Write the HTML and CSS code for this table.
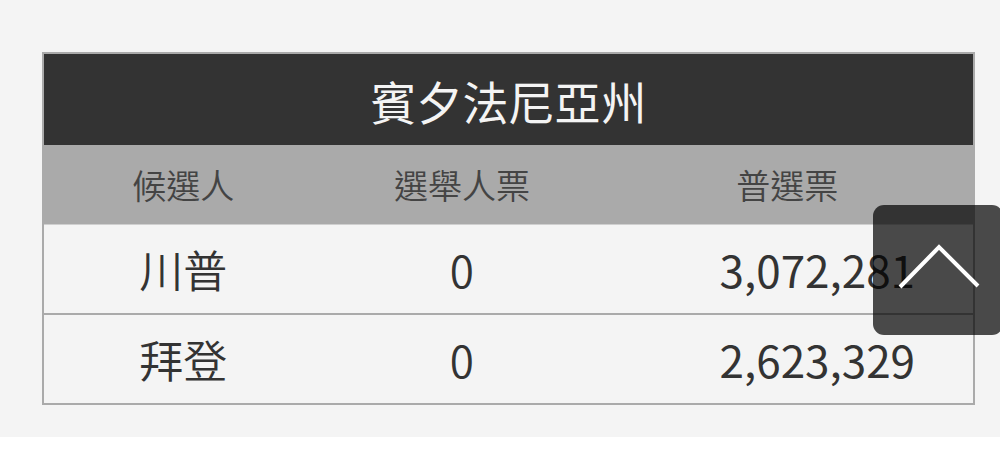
FILE: index.html
```html
<!DOCTYPE html>
<html lang="zh-Hant">
<head>
<meta charset="utf-8">
<title>賓夕法尼亞州</title>
<link rel="stylesheet" href="styles.css">
</head>
<body>
<section class="panel">
  <table class="results">
    <colgroup>
      <col class="c1"><col class="c2"><col class="c3">
    </colgroup>
    <thead>
      <tr class="title-row"><th colspan="3">賓夕法尼亞州</th></tr>
      <tr class="head-row"><th>候選人</th><th>選舉人票</th><th>普選票</th></tr>
    </thead>
    <tbody>
      <tr><td>川普</td><td>0</td><td class="num">3,072,281</td></tr>
      <tr><td>拜登</td><td>0</td><td class="num">2,623,329</td></tr>
    </tbody>
  </table>
</section>
<a class="to-top" href="#" aria-label="回到頂部">
  <svg viewBox="0 0 130 130" width="130" height="130" aria-hidden="true">
    <polyline points="27,82 66,42 105,81" fill="none" stroke="#ffffff" stroke-width="4"/>
  </svg>
</a>
</body>
</html>
```

FILE: styles.css
```css
html, body {
  margin: 0;
  padding: 0;
  background: #ffffff;
}
body {
  font-family: "Noto Sans CJK TC", "Noto Sans", sans-serif;
  color: #333333;
}
.panel {
  background: #f4f4f4;
  padding: 52px 25px 32px 42px;
}
.results {
  width: 933px;
  border-collapse: collapse;
  border: 2px solid #aaaaaa;
  table-layout: fixed;
}
.c1 { width: 30%; }
.c2 { width: 30%; }
.c3 { width: 40%; }
.title-row th {
  background: #333333;
  color: #f4f4f4;
  font-size: 46px;
  font-weight: 400;
  height: 91px;
  padding: 0;
  line-height: 1;
  border-bottom: 0;
}
.head-row th {
  background: #aaaaaa;
  color: #444444;
  font-size: 34px;
  font-weight: 350;
  height: 79px;
  padding: 0;
  line-height: 1;
  border-bottom: 1px solid #cfcfcf;
}
.results td {
  text-align: center;
  font-size: 44px;
  font-weight: 350;
  height: 88px;
  padding: 0;
  line-height: 1;
  color: #333333;
  border-bottom: 2px solid #aaaaaa;
}
.results td.num {
  padding-left: 60px;
  font-weight: 400;
}
.to-top {
  position: fixed;
  top: 205px;
  left: 873px;
  width: 130px;
  height: 130px;
  border-radius: 11px;
  background: rgba(0, 0, 0, 0.7);
  display: block;
}
.to-top svg {
  display: block;
}
```
